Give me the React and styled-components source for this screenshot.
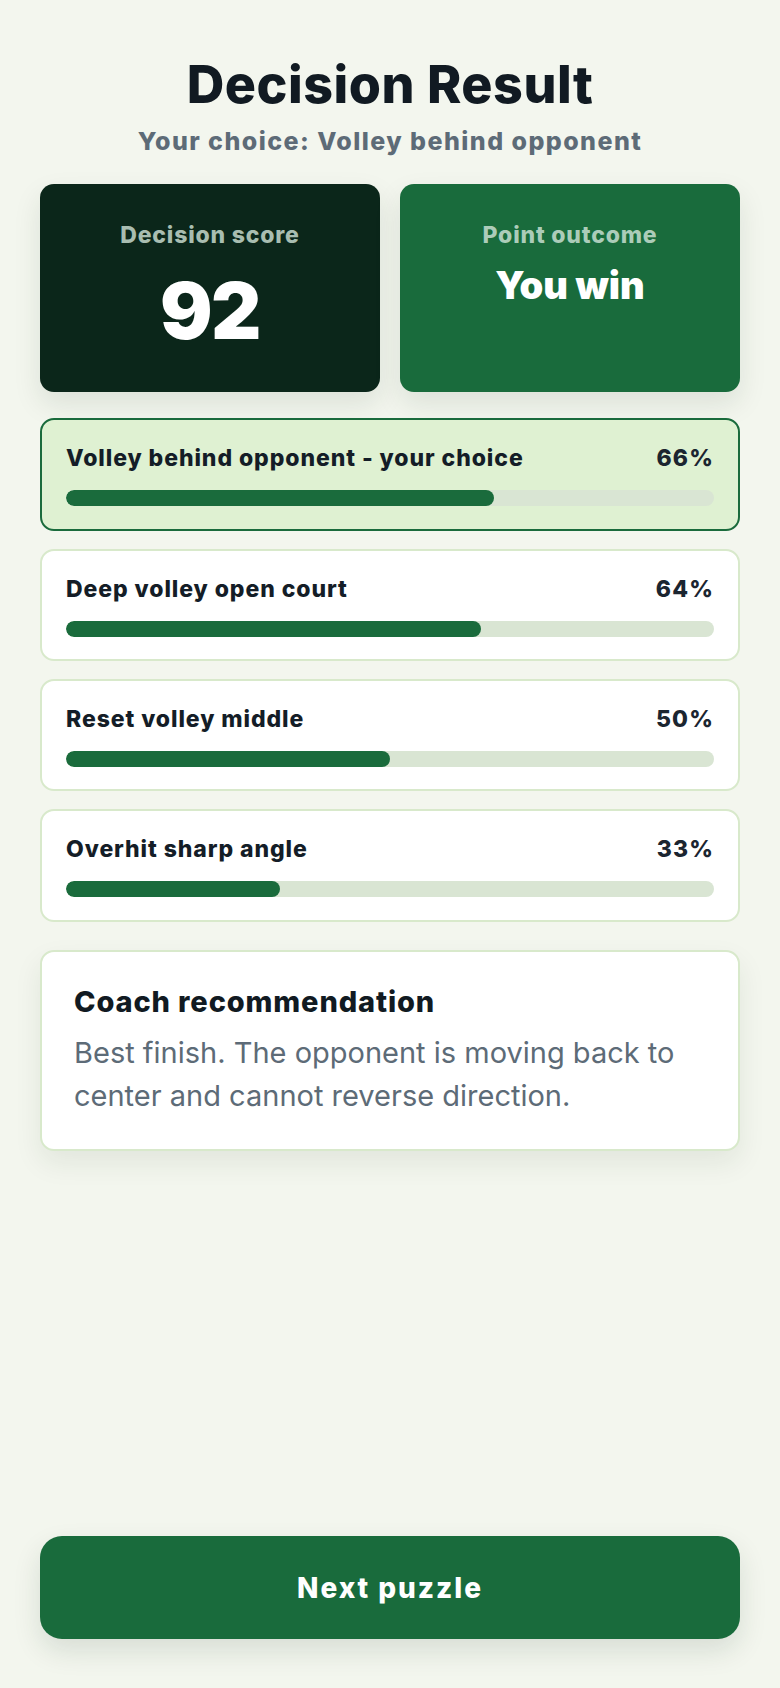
import React from "react";
import styled, { createGlobalStyle } from "styled-components";

const GlobalStyle = createGlobalStyle`
  * { box-sizing: border-box; }
  html, body { margin: 0; padding: 0; background: #f3f6ee; }
  body {
    font-family: Inter, "Noto Sans", "Liberation Sans", sans-serif;
    color: #111a22;
    -webkit-font-smoothing: antialiased;
  }
`;

const Page = styled.main`
  min-height: 100vh;
  display: flex;
  flex-direction: column;
  padding: 55px 40px 49px;
`;

const Header = styled.header`
  text-align: center;
`;

const Title = styled.h1`
  margin: 0;
  font-size: 52px;
  line-height: 1.15;
  font-weight: 800;
  letter-spacing: 0.01em;
  color: #111a22;
`;

const Subtitle = styled.p`
  margin: 10px 0 0;
  font-size: 25px;
  line-height: 1.3;
  font-weight: 800;
  letter-spacing: 0.058em;
  color: #5d6b77;
`;

const StatGrid = styled.section`
  display: grid;
  grid-template-columns: 1fr 1fr;
  gap: 20px;
  margin-top: 27px;
`;

const StatCard = styled.div`
  height: 208px;
  border-radius: 14px;
  padding: 37px 20px 0;
  text-align: center;
  background: ${(p) => (p.$tone === "dark" ? "#0b261a" : "#196b3c")};
  box-shadow: 0 12px 28px rgba(20, 50, 30, 0.1);
`;

const StatLabel = styled.div`
  font-size: 23px;
  line-height: 1.3;
  font-weight: 800;
  letter-spacing: 0.035em;
  color: rgba(214, 232, 220, 0.78);
`;

const StatValue = styled.div`
  margin-top: ${(p) => (p.$big ? "21px" : "14px")};
  font-size: ${(p) => (p.$big ? "78px" : "38px")};
  line-height: ${(p) => (p.$big ? 1 : 1.1)};
  font-weight: 900;
  letter-spacing: ${(p) => (p.$big ? "-0.02em" : "0")};
  color: #ffffff;
`;

const OptionList = styled.section`
  display: flex;
  flex-direction: column;
  gap: 18px;
  margin-top: 26px;
`;

const OptionRow = styled.div`
  border-radius: 14px;
  padding: 24px 24px 22.5px;
  border: 2px solid ${(p) => (p.$chosen ? "#1a6b3c" : "#d8e9cb")};
  background: ${(p) => (p.$chosen ? "#dff1d2" : "#ffffff")};
`;

const OptionHead = styled.div`
  display: flex;
  justify-content: space-between;
  align-items: baseline;
  font-size: 23px;
  line-height: 1.3;
  font-weight: 800;
  letter-spacing: 0.04em;
  color: #141d27;
`;

const Percent = styled.span`
  font-weight: 800;
  letter-spacing: 0.05em;
  color: #1b2530;
`;

const Track = styled.div`
  margin-top: 16px;
  height: 16px;
  border-radius: 8px;
  background: #d9e5d3;
  overflow: hidden;
`;

const Fill = styled.div`
  height: 100%;
  border-radius: 8px;
  background: #1a6b3c;
`;

const CoachCard = styled.section`
  margin-top: 28px;
  border-radius: 14px;
  border: 2px solid #d8e9cb;
  background: #ffffff;
  padding: 32px 32px 32px;
  box-shadow: 0 12px 28px rgba(20, 50, 30, 0.08);
`;

const CoachTitle = styled.h2`
  margin: 0;
  font-size: 29px;
  line-height: 1.25;
  font-weight: 800;
  letter-spacing: 0.03em;
  color: #111a22;
`;

const CoachText = styled.p`
  margin: 11px 0 0;
  font-size: 29px;
  line-height: 43px;
  font-weight: 400;
  color: #5d6b77;
`;

const NextButton = styled.button`
  margin-top: auto;
  height: 103px;
  width: 100%;
  border: none;
  border-radius: 22px;
  background: #196b3c;
  color: #ffffff;
  font-family: inherit;
  font-size: 28px;
  font-weight: 800;
  letter-spacing: 0.07em;
  box-shadow: 0 12px 28px rgba(20, 50, 30, 0.12);
  cursor: pointer;
`;

const options = [
  { label: "Volley behind opponent - your choice", pct: 66, chosen: true },
  { label: "Deep volley open court", pct: 64 },
  { label: "Reset volley middle", pct: 50 },
  { label: "Overhit sharp angle", pct: 33 },
];

export default function App() {
  return (
    <>
      <GlobalStyle />
      <Page>
        <Header>
          <Title>Decision Result</Title>
          <Subtitle>Your choice: Volley behind opponent</Subtitle>
        </Header>

        <StatGrid>
          <StatCard $tone="dark">
            <StatLabel>Decision score</StatLabel>
            <StatValue $big>92</StatValue>
          </StatCard>
          <StatCard $tone="green">
            <StatLabel>Point outcome</StatLabel>
            <StatValue>You win</StatValue>
          </StatCard>
        </StatGrid>

        <OptionList>
          {options.map((o) => (
            <OptionRow key={o.label} $chosen={o.chosen}>
              <OptionHead>
                <span>{o.label}</span>
                <Percent>{o.pct}%</Percent>
              </OptionHead>
              <Track>
                <Fill style={{ width: `${o.pct}%` }} />
              </Track>
            </OptionRow>
          ))}
        </OptionList>

        <CoachCard>
          <CoachTitle>Coach recommendation</CoachTitle>
          <CoachText>
            Best finish. The opponent is moving back to center and cannot reverse direction.
          </CoachText>
        </CoachCard>

        <NextButton type="button">Next puzzle</NextButton>
      </Page>
    </>
  );
}
